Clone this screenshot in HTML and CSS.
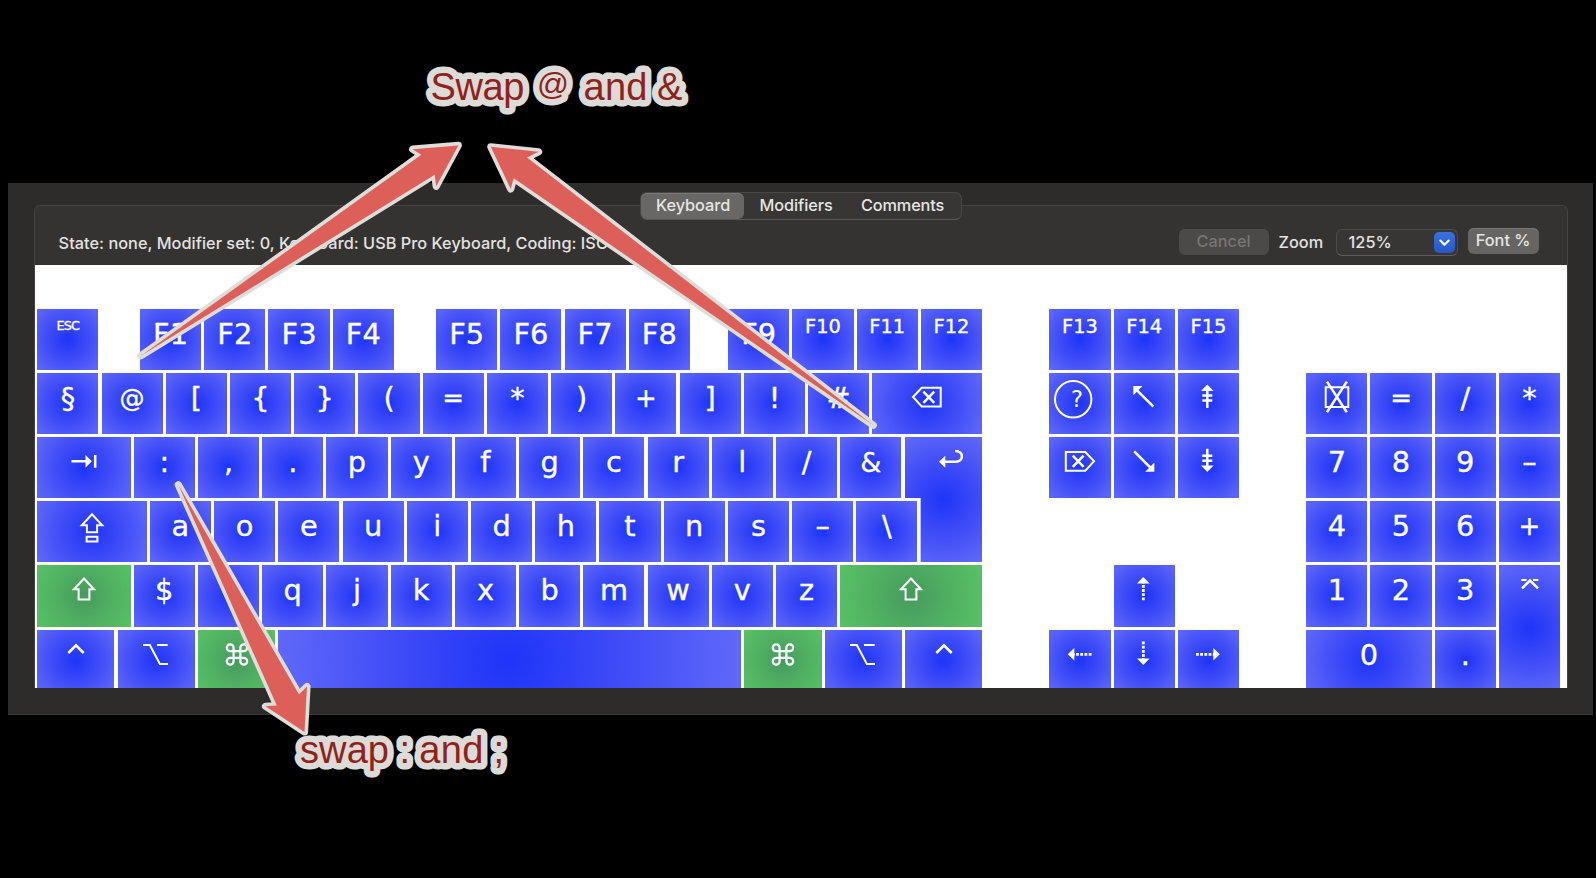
FILE: index.html
```html
<!DOCTYPE html>
<html lang="en">
<head>
<meta charset="utf-8">
<title>Keyboard layout</title>
<link rel="stylesheet" href="styles.css">
</head>
<body>
<svg class="defs" aria-hidden="true">
  <symbol id="backspace" viewBox="-20 0 40 48"><path d="M-14 24L-5.3 14.7H13.7V33.4H-5.3Z"/><path class="thick" d="M-3.6 18.7L7.2 29.9M7.2 18.7L-3.6 29.9"/></symbol>
  <symbol id="del" viewBox="-20 0 40 48"><path d="M14 24.3L5.3 15H-14.2V33.8H5.3Z"/><path class="thick" d="M3.6 18.7L-7.2 29.9M-7.2 18.7L3.6 29.9"/></symbol>
  <symbol id="return" viewBox="-20 0 40 48"><path class="thick" d="M1 24.7H12.5C21 24.7 21.3 13.9 12.2 13.9"/><path class="solid" d="M-4 24.7L2.3 18.7V30.8Z"/></symbol>
  <symbol id="tab" viewBox="-20 0 40 48"><path class="thick" d="M-12.5 24.3H2M11.2 18V30.7"/><path class="solid" d="M7.8 24.3L1.5 18V30.7Z"/></symbol>
  <symbol id="caps" viewBox="-20 0 40 48"><path d="M0 13.3L10.2 24.3H5.1V31.2H-5.1V24.3H-10.2ZM-5.4 35.8H5.4V40.4H-5.4Z"/></symbol>
  <symbol id="shift" viewBox="-20 0 40 48"><path d="M0 13.5L10 24.3H5.4V34.4H-5.4V24.3H-10Z"/></symbol>
  <symbol id="ctrl" viewBox="-20 0 40 48"><path class="thick" d="M-7.7 23L0 15.3L7.7 23"/></symbol>
  <symbol id="option" viewBox="-20 0 40 48"><path d="M-13 15H-6.2L3.9 34H12M1 15H11.7"/></symbol>
  <symbol id="command" viewBox="-20 0 40 48"><path transform="translate(-13.6 10.9) scale(1.133)" d="M15 6v12a3 3 0 1 0 3-3H6a3 3 0 1 0 3 3V6a3 3 0 1 0-3 3h12a3 3 0 1 0-3-3"/></symbol>
  <symbol id="home" viewBox="-20 0 40 48"><path class="thick" d="M-8 16.4L9.4 33.7"/><path class="solid" d="M-10.7 13H-1.5L-10.7 22.2Z"/></symbol>
  <symbol id="end" viewBox="-20 0 40 48"><path class="thick" d="M-9.8 14.4L7.8 32"/><path class="solid" d="M10.4 34.7H1.2L10.4 25.5Z"/></symbol>
  <symbol id="pgup" viewBox="-20 0 40 48"><path class="thick" d="M-.7 16V35M-5.7 22.4H4.3M-5.7 27.4H4.3"/><path class="solid" d="M-.7 11.5L5.6 17.9H-7Z"/></symbol>
  <symbol id="pgdn" viewBox="-20 0 40 48"><path class="thick" d="M-.7 11.7V30M-5.7 18.7H4.3M-5.7 23.7H4.3"/><path class="solid" d="M-.7 35L5.6 28.6H-7Z"/></symbol>
  <symbol id="up" viewBox="-20 0 40 48"><path class="dash" d="M-.7 35.3V17"/><path class="solid" d="M-.7 12L5.6 18.5H-7Z"/></symbol>
  <symbol id="down" viewBox="-20 0 40 48"><path class="dash" d="M-.7 11.5V30"/><path class="solid" d="M-.7 35L5.6 28.5H-7Z"/></symbol>
  <symbol id="left" viewBox="-20 0 40 48"><path class="dash" d="M11.5 24.3H-6"/><path class="solid" d="M-12.2 24.3L-5.7 18V30.6Z"/></symbol>
  <symbol id="right" viewBox="-20 0 40 48"><path class="dash" d="M-12 24.3H6"/><path class="solid" d="M11.8 24.3L5.3 18V30.6Z"/></symbol>
  <symbol id="clear" viewBox="-20 0 40 48"><path d="M-11.3 14.2H11.3V33.9H-11.3Z"/><path class="thick" d="M-10 8.6L9.8 39.2M9.8 8.6L-10 39.2"/></symbol>
  <symbol id="enter" viewBox="-20 0 40 48"><path d="M-8.7 15H-3.4M3 15H8.4"/><path class="thick" d="M-8 23.3L0 15.5L8 23.3"/></symbol>
</svg>

<main class="window">
  <section class="panel">
    <nav class="tabs">
      <button class="tab active">Keyboard</button>
      <button class="tab">Modifiers</button>
      <button class="tab last">Comments</button>
    </nav>
    <header class="toolbar">
      <p class="state">State: none, Modifier set: 0, Keyboard: USB Pro Keyboard, Coding: ISO</p>
      <button class="button cancel">Cancel</button>
      <span class="zoom-label">Zoom</span>
      <div class="combo"><span>125%</span><i class="combo-arrow"><svg viewBox="0 0 21 21"><path d="M6.3 8.5L10.5 12.8L14.7 8.5"/></svg></i></div>
      <button class="button font">Font %</button>
    </header>
    <div class="board">
      <div class="block letters">
        <div class="row">
          <div class="key tiny">ESC</div>
          <div class="key group">F1</div><div class="key">F2</div><div class="key">F3</div><div class="key">F4</div>
          <div class="key group-mid">F5</div><div class="key">F6</div><div class="key">F7</div><div class="key">F8</div>
          <div class="key group-near">F9</div><div class="key small">F10</div><div class="key small">F11</div><div class="key small">F12</div>
        </div>
        <div class="row">
          <div class="key">§</div><div class="key at">@</div><div class="key">[</div><div class="key">{</div><div class="key">}</div><div class="key">(</div><div class="key op">=</div><div class="key">*</div><div class="key">)</div><div class="key op">+</div><div class="key">]</div><div class="key">!</div><div class="key">#</div>
          <div class="key fill"><svg class="icon"><use href="#backspace"/></svg></div>
        </div>
        <div class="row">
          <div class="key w150"><svg class="icon"><use href="#tab"/></svg></div>
          <div class="key">:</div><div class="key">,</div><div class="key">.</div><div class="key">p</div><div class="key">y</div><div class="key">f</div><div class="key">g</div><div class="key">c</div><div class="key">r</div><div class="key">l</div><div class="key">/</div><div class="key amp">&amp;</div>
          <div class="key fill return"><svg class="icon"><use href="#return"/></svg></div>
        </div>
        <div class="row">
          <div class="key w175"><svg class="icon"><use href="#caps"/></svg></div>
          <div class="key">a</div><div class="key">o</div><div class="key">e</div><div class="key">u</div><div class="key">i</div><div class="key">d</div><div class="key">h</div><div class="key">t</div><div class="key">n</div><div class="key">s</div><div class="key">–</div><div class="key">\</div>
        </div>
        <div class="row">
          <div class="key w150 held"><svg class="icon"><use href="#shift"/></svg></div>
          <div class="key">$</div><div class="key"></div><div class="key">q</div><div class="key">j</div><div class="key">k</div><div class="key">x</div><div class="key">b</div><div class="key">m</div><div class="key">w</div><div class="key">v</div><div class="key">z</div>
          <div class="key fill held"><svg class="icon"><use href="#shift"/></svg></div>
        </div>
        <div class="row">
          <div class="key w125"><svg class="icon"><use href="#ctrl"/></svg></div>
          <div class="key w125"><svg class="icon"><use href="#option"/></svg></div>
          <div class="key w125 held"><svg class="icon"><use href="#command"/></svg></div>
          <div class="key fill"></div>
          <div class="key w125 held"><svg class="icon"><use href="#command"/></svg></div>
          <div class="key w125"><svg class="icon"><use href="#option"/></svg></div>
          <div class="key w125"><svg class="icon"><use href="#ctrl"/></svg></div>
        </div>
      </div>
      <div class="block nav-keys">
        <div class="row">
          <div class="key small">F13</div><div class="key small">F14</div><div class="key small">F15</div>
        </div>
        <div class="row">
          <div class="key"><svg class="icon" viewBox="-20 0 40 48"><circle cx="-6.8" cy="26.3" r="18.2"/><text x="-3" y="34.4">?</text></svg></div>
          <div class="key"><svg class="icon"><use href="#home"/></svg></div>
          <div class="key"><svg class="icon"><use href="#pgup"/></svg></div>
        </div>
        <div class="row">
          <div class="key"><svg class="icon"><use href="#del"/></svg></div>
          <div class="key"><svg class="icon"><use href="#end"/></svg></div>
          <div class="key"><svg class="icon"><use href="#pgdn"/></svg></div>
        </div>
        <div class="row"></div>
        <div class="row centered">
          <div class="key"><svg class="icon"><use href="#up"/></svg></div>
        </div>
        <div class="row">
          <div class="key"><svg class="icon"><use href="#left"/></svg></div>
          <div class="key"><svg class="icon"><use href="#down"/></svg></div>
          <div class="key"><svg class="icon"><use href="#right"/></svg></div>
        </div>
      </div>
      <div class="block pad">
        <div class="row"></div>
        <div class="row">
          <div class="key"><svg class="icon"><use href="#clear"/></svg></div><div class="key op">=</div><div class="key">/</div><div class="key">*</div>
        </div>
        <div class="row">
          <div class="key">7</div><div class="key">8</div><div class="key">9</div><div class="key">–</div>
        </div>
        <div class="row">
          <div class="key">4</div><div class="key">5</div><div class="key">6</div><div class="key op">+</div>
        </div>
        <div class="row">
          <div class="key">1</div><div class="key">2</div><div class="key">3</div>
          <div class="key tall"><svg class="icon"><use href="#enter"/></svg></div>
        </div>
        <div class="row">
          <div class="key w200">0</div><div class="key">.</div>
        </div>
      </div>
    </div>
  </section>
</main>

<svg class="notes" viewBox="0 0 1596 878">
  <defs>
    <g id="captions">
      <text x="430.5" y="99.5" textLength="94">Swap</text>
      <text class="note-at" x="537" y="95.4">@</text>
      <text x="583.5" y="99.5" textLength="64">and</text>
      <text x="657" y="99.5">&amp;</text>
      <text x="300" y="762.5" textLength="89">swap</text>
      <text x="399.6" y="762.5">:</text>
      <text x="419.3" y="762.5" textLength="64">and</text>
      <text x="493.5" y="762.5">;</text>
    </g>
  </defs>
  <path class="arrow" d="M141 355.8L421.3 154.8L412.7 149.2L458.3 145.4L436.2 186.3L434.7 174.8Z"/>
  <path class="arrow" d="M873.3 425.3L527 157.5L538.6 151.8L490.8 146.8L510.7 189L513.7 178.3Z"/>
  <path class="arrow" d="M178.3 484.8L299 694.5L307 686.5L304.5 732L265.5 706.3L276.8 705.5Z"/>
  <use class="note halo" href="#captions"/>
  <use class="note" href="#captions"/>
</svg>
</body>
</html>
```
FILE: styles.css
```css
* { box-sizing: border-box; }

body {
  margin: 0;
  width: 1596px;
  height: 878px;
  overflow: hidden;
  background: #000;
  padding: 183px 3.4px 0 7.6px;
  font-family: Inter, "Liberation Sans", sans-serif;
  color: #e3e2e1;
}

.defs { position: absolute; width: 0; height: 0; }

.window {
  height: 532px;
  background: #2d2c2a;
  border-bottom: 1px solid #393836;
  padding: 22px 26px 0 26px;
}

.panel {
  height: 483px;
  background: #353331;
  border: 1px solid #434240;
  border-bottom: 0;
  border-radius: 6px 6px 0 0;
  margin-right: -1px;
  display: flex;
  flex-direction: column;
}

.tabs {
  display: flex;
  align-self: center;
  width: 322px;
  height: 28px;
  margin: -14px 0 0 1px;
  border: 1px solid #484745;
  border-bottom-color: #5a5957;
  border-radius: 7px;
  background: #373634;
  flex: none;
}

.tab {
  border: 0;
  padding: 0 1px 2px 0;
  width: 105px;
  background: none;
  color: #e6e5e4;
  font: 450 16.3px/23px Inter, sans-serif;
  letter-spacing: -0.05px;
}

.tab.active {
  width: 103px;
  padding-left: 2px;
  background: #686765;
  border-radius: 6px;
  box-shadow: inset 0 1px #7a7977;
}

.tab.last { width: 108px; letter-spacing: -0.15px; }

.toolbar {
  display: flex;
  align-items: flex-start;
  height: 45px;
  flex: none;
  padding: 7px 28px 0 24px;
}

.state {
  margin: 4px auto 0 0;
  font-size: 16.3px;
  font-weight: 450;
  line-height: 25px;
  white-space: nowrap;
  letter-spacing: 0.03px;
}

.button {
  border: 0;
  padding: 0;
  border-radius: 6px;
  height: 26px;
  margin-top: 2px;
  font: 450 16.3px/23px Inter, sans-serif;
  text-align: center;
}

.cancel { width: 90px; padding-bottom: 2px; background: #4b4a48; color: #777674; }

.zoom-label { width: 67px; padding-left: 10px; font-size: 16.3px; font-weight: 450; line-height: 23px; margin-top: 4px; }

.combo {
  display: flex;
  justify-content: space-between;
  width: 122px;
  height: 27px;
  margin-top: 2px;
  padding: 1px 2px 1px 12px;
  border: 1px solid #4d4c4a;
  border-bottom-color: #5f5e5c;
  border-radius: 6px;
  background: #373634;
  font-size: 16.3px;
  font-weight: 450;
  line-height: 23px;
}

.combo-arrow { width: 21px; height: 21px; margin-top: 1px; border-radius: 5px; background: linear-gradient(#3a70df, #2658c8); }
.combo-arrow svg { display: block; fill: none; stroke: #fff; stroke-width: 2.1; stroke-linecap: round; stroke-linejoin: round; }

.font { width: 71px; margin: 1px 0 0 10px; padding-bottom: 2px; background: #666563; color: #e6e5e4; box-shadow: inset 0 1px #787775; }

.board {
  display: flex;
  gap: 67.2px;
  height: 423px;
  overflow: hidden;
  padding: 43.6px 0 0 2.7px;
  background: #fff;
}

.block { flex: none; display: flex; flex-direction: column; gap: 3.12px; }
.letters { width: 945px; }
.nav-keys { width: 189.6px; }
.pad { width: 253.8px; }

.row { flex: none; display: flex; gap: 3.15px; height: 61.1px; }
.centered { justify-content: center; }

.key {
  flex: none;
  width: 61.1px;
  height: 61.1px;
  background: radial-gradient(circle farthest-corner, #1e34f8 0%, #3f4cf7 48%, #6169f9 100%);
  color: #fff;
  font: 28.8px/50.3px "DejaVu Sans", sans-serif;
  -webkit-text-stroke: 0.35px #fff;
  text-align: center;
}

.held { background: radial-gradient(circle farthest-corner, #469a5e 0%, #50b062 50%, #58c165 100%); }
.small { font-size: 19.4px; line-height: 36px; }
.tiny { font-size: 12.8px; line-height: 33px; letter-spacing: -0.8px; }
.at { font-size: 25px; line-height: 51px; }
.amp { font-size: 27px; line-height: 51px; }
.op { font-size: 26px; line-height: 51px; }
.group { margin-left: 38.5px; }
.group-mid { margin-left: 39.1px; }
.group-near { margin-left: 35.2px; }
.w125 { width: 77.2px; }
.w150 { width: 93.3px; }
.w175 { width: 109.4px; }
.w200 { width: 125.3px; }
.fill { flex: 1; }
.tall { height: 125.3px; }

/* ISO return key: wide upper half, narrower lower half */
.return { height: 125.3px; clip-path: polygon(0 0, 100% 0, 100% 100%, 16.1px 100%, 16.1px 61.1px, 0 61.1px); }

.icon {
  display: block;
  width: 40px;
  height: 48px;
  margin: 0 auto;
  overflow: visible;
  fill: none;
  stroke: #fff;
  stroke-width: 2;
}
.thick { stroke-width: 2.5; }
.solid { fill: #fff; stroke: none; }
.dash { stroke-width: 2.8; stroke-dasharray: 2.8 1.4; }
.icon text { font-size: 22.5px; fill: #fff; stroke: none; text-anchor: middle; }

.notes { position: absolute; left: 0; top: 0; width: 1596px; height: 878px; pointer-events: none; }
.arrow { fill: #dc6059; stroke: #dfddda; stroke-width: 7.2; stroke-linejoin: round; paint-order: stroke; }
.note { font: 38px "Liberation Sans", Arial, sans-serif; fill: #8f231c; }
.halo { fill: #dddbd7; stroke: #dddbd7; stroke-width: 13px; stroke-linejoin: round; }
.note-at { font-size: 31.5px; }
```
